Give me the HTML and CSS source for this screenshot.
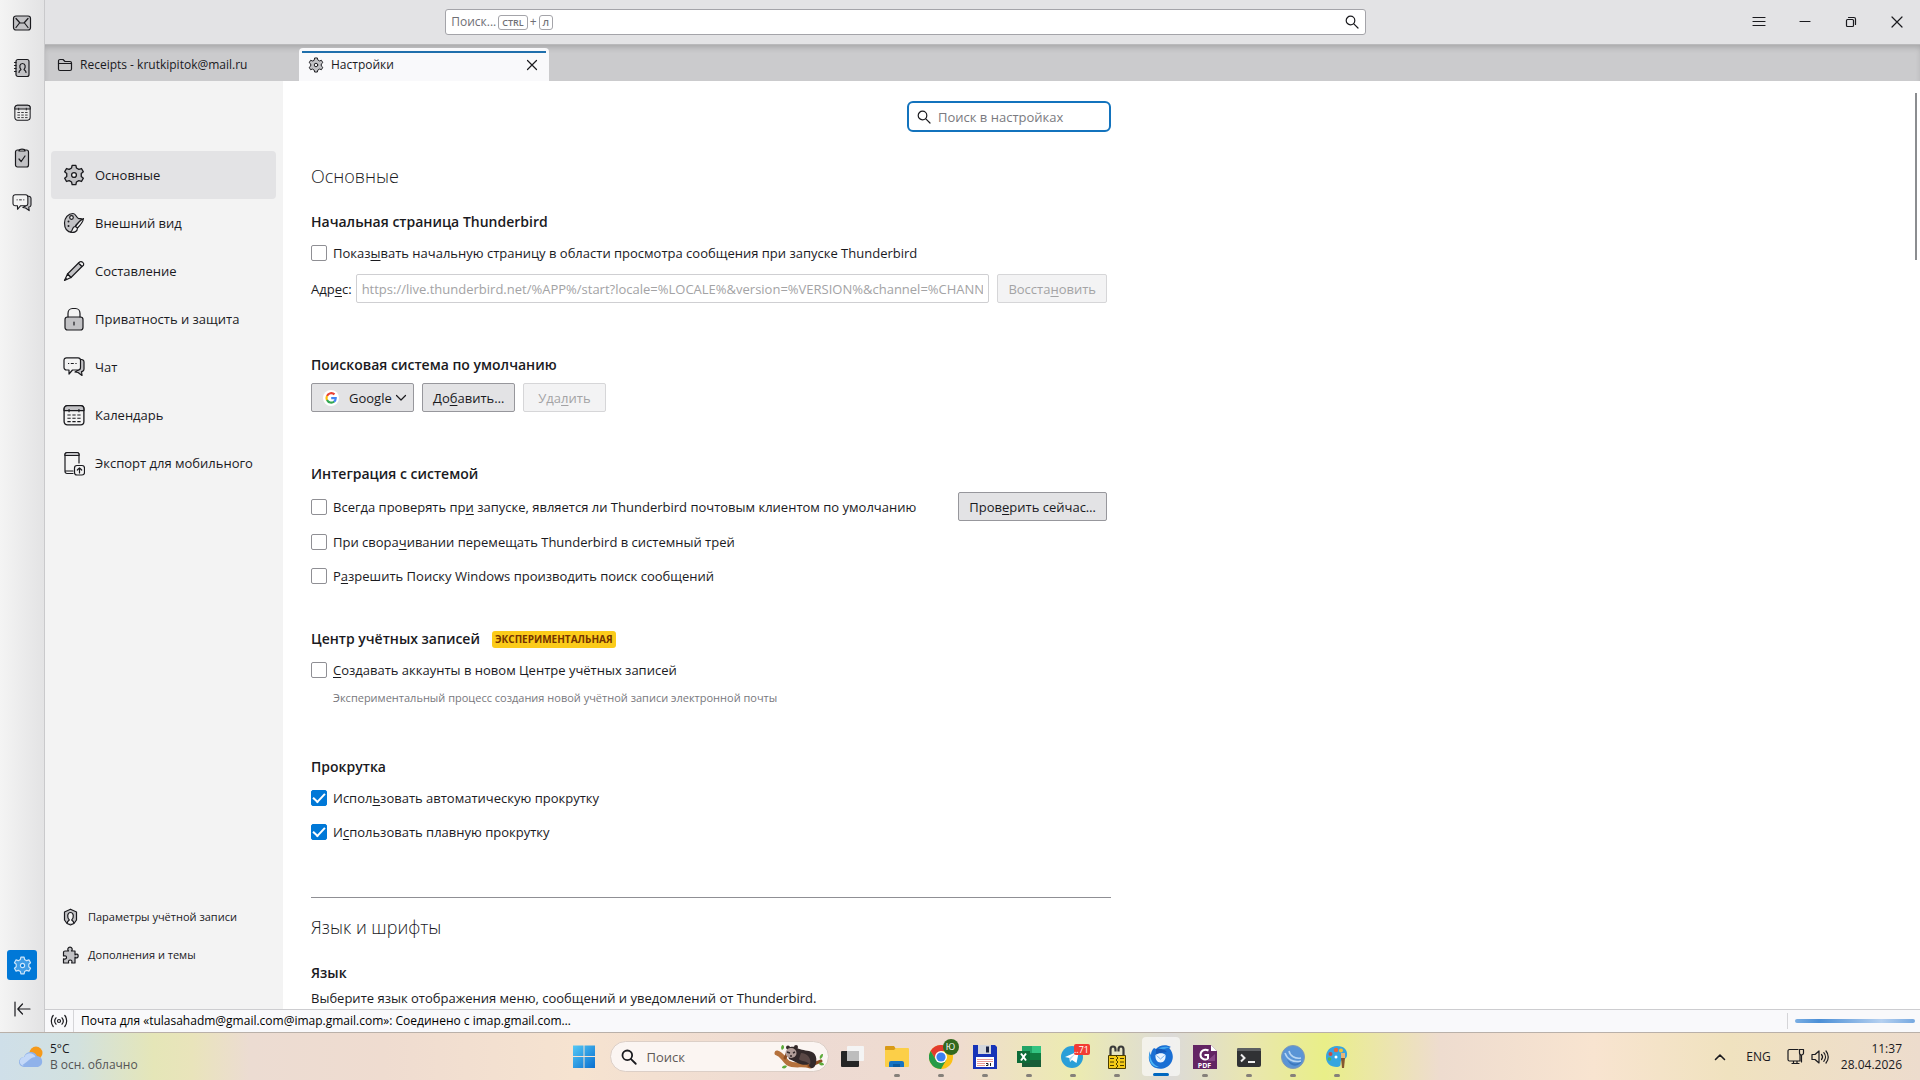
FILE: index.html
```
<!DOCTYPE html>
<html lang="ru">
<head>
    <meta charset="UTF-8">
    <meta name="viewport" content="width=device-width, initial-scale=1.0">
    <title>Настройки</title>
    <link rel="stylesheet" href="styles.css">
</head>
<body>

<!-- shared icons -->
<svg class="sprite" aria-hidden="true">
    <symbol id="i-gear" viewBox="0 0 20 20">
        <path class="fill" d="M7.8 3.6 8.3 1.2h3.4l.5 2.4 2.2 1.3 2.4-.8 1.7 3-1.9 1.6v2.6l1.9 1.6-1.7 3-2.4-.8-2.2 1.3-.5 2.4H8.3l-.5-2.4-2.2-1.3-2.4.8-1.7-3 1.9-1.6V8.7L1.5 7.1l1.7-3 2.4.8z"/>
        <circle class="hole" cx="10" cy="10" r="2.2"/>
    </symbol>
    <symbol id="i-calendar" viewBox="0 0 20 20">
        <rect x="1" y="1.5" width="18" height="17.5" rx="3"/>
        <path class="fill" d="M1 6V4.5a3 3 0 0 1 3-3h12a3 3 0 0 1 3 3V6z"/>
        <path class="thin" d="M5.5 4.5v3M14.5 4.5v3"/>
        <path class="thin" d="M4 10h3M8.5 10h3M13 10h3M4 13h3M8.500 13h3M13 13h3M4 16h3M8.5 16h3M13 16h3"/>
    </symbol>
    <symbol id="i-chat" viewBox="0 0 22 20">
        <path class="fill" d="M17 2.500h1.500A2.500 2.500 0 0 1 21 5v7a2.500 2.500 0 0 1-2.500 2.500l.5 4-4-3-3-.5 5-3z"/>
        <path class="paper" d="M3.500.8h11.500A2.500 2.500 0 0 1 17.500 3.300v7.200A2.500 2.500 0 0 1 15 13H9.500L6 17v-4H3.500A2.500 2.500 0 0 1 1 10.500V3.300A2.500 2.500 0 0 1 3.500.8z"/>
        <path class="thin" d="M5 6.500h1.200M7.800 6.500h3M12.400 6.500h1.200"/>
    </symbol>
    <symbol id="i-search" viewBox="0 0 16 16">
        <circle cx="6.500" cy="6.500" r="4.300"/>
        <path d="m9.800 9.800 4.200 4.200"/>
    </symbol>
</svg>

<div class="app">
    <nav class="spaces" aria-label="Области">
        <button class="space" aria-label="Почта">
            <svg class="icon" width="20" height="20" viewBox="0 0 20 20"><rect class="fill" x="1.500" y="3" width="17" height="14" rx="2.500"/><path d="m4 5.500 4 4.500h4l4-4.500M4 14.500 7.500 10M16 14.500 12.500 10"/></svg>
        </button>
        <button class="space" aria-label="Адресная книга">
            <svg class="icon" width="20" height="20" viewBox="0 0 20 20"><rect class="fill" x="4" y="1.500" width="13" height="17" rx="2"/><path d="M2.500 4.500H4M2.500 7.500H4M2.500 10.500H4M2.500 13.500H4M7 14.500c0-2 1.500-2 2-3-2-2.500-1.500-6 1.500-6s3.500 3.500 1.500 6c.5 1 2 1 2 3"/></svg>
        </button>
        <button class="space" aria-label="Календарь">
            <svg class="icon" width="17" height="17"><use href="#i-calendar"/></svg>
        </button>
        <button class="space" aria-label="Задачи">
            <svg class="icon" width="20" height="20" viewBox="0 0 20 20"><rect class="fill" x="3.500" y="2" width="13" height="17" rx="2"/><path class="paper" d="M7 3c0-2.500 6-2.500 6 0z"/><path d="m7 11 2.200 2.500L13 8"/></svg>
        </button>
        <button class="space" aria-label="Чат">
            <svg class="icon" width="20" height="18"><use href="#i-chat"/></svg>
        </button>
        <div class="spaces-end">
            <button class="space-active" aria-label="Настройки">
                <svg class="icon" width="19" height="19"><use href="#i-gear"/></svg>
            </button>
            <button class="collapse" aria-label="Свернуть">
                <svg class="icon" width="18" height="16" viewBox="0 0 18 16"><path d="M2 1v14M5 8h12M9.500 3 4.800 8l4.700 5"/></svg>
            </button>
        </div>
    </nav>

    <div class="window">
        <header class="titlebar">
            <div class="global-search">
                <label for="globalSearch">Поиск... <kbd>CTRL</kbd>+<kbd>Л</kbd></label>
                <input type="text" id="globalSearch">
                <button aria-label="Найти">
                    <svg class="icon" width="16" height="16"><use href="#i-search"/></svg>
                </button>
            </div>
            <div class="window-buttons">
                <button aria-label="Меню"><svg class="icon" width="14" height="14" viewBox="0 0 14 14"><path d="M1 2.500h12M1 6.500h12M1 10.500h12"/></svg></button>
                <button aria-label="Свернуть окно"><svg class="icon" width="14" height="14" viewBox="0 0 14 14"><path d="M2 6.500h10"/></svg></button>
                <button aria-label="Восстановить окно"><svg class="icon" width="14" height="14" viewBox="0 0 14 14"><rect x="2.500" y="4.500" width="7" height="7" rx="1"/><path d="M4.500 2.500H10a1.500 1.500 0 0 1 1.500 1.500v5.500"/></svg></button>
                <button aria-label="Закрыть окно"><svg class="icon" width="14" height="14" viewBox="0 0 14 14"><path d="m2 2 10 10M12 2 2 12"/></svg></button>
            </div>
        </header>

        <div class="tabs">
            <a class="tab" href="#receipts">
                <svg class="icon" width="16" height="16" viewBox="0 0 16 16"><path class="fill" d="M1.500 6V4a1.500 1.500 0 0 1 1.500-1.500h3l2 2h5A1.500 1.500 0 0 1 14.500 6v.5h-13z"/><path d="M1.500 6.500h13V12a1.500 1.500 0 0 1-1.500 1.500H3A1.500 1.500 0 0 1 1.500 12z"/></svg>
                <span>Receipts - krutkipitok@mail.ru</span>
            </a>
            <div class="tab tab-selected">
                <svg class="icon" width="16" height="16"><use href="#i-gear"/></svg>
                <span>Настройки</span>
                <button aria-label="Закрыть вкладку"><svg class="icon" width="12" height="12" viewBox="0 0 12 12"><path d="m1.500 1.500 9 9M10.500 1.500l-9 9"/></svg></button>
            </div>
        </div>

        <div class="page">
            <nav class="sidebar">
                <a class="category selected" href="#general">
                    <svg class="icon" width="22" height="22"><use href="#i-gear"/></svg>Основные
                </a>
                <a class="category" href="#appearance">
                    <svg class="icon" width="22" height="22" viewBox="0 0 22 22"><path class="fill" d="M9 20.500C4 20 1.500 16 1.500 11S5 1.500 10 1.500c3 0 3 4 5.500 5 1.500.5 2.500-.5 3.500.5L13 13z"/><circle class="paper" cx="8.500" cy="5.500" r="1.800"/><circle class="dot" cx="5.500" cy="9.500" r="1"/><circle class="dot" cx="5.500" cy="14" r="1"/><path class="paper" d="M20.500 6.500c-3 1.500-5.500 4.500-8 8l2 1.500c3-3 5.500-6 6-9.500zM12.500 14.500c-4 0-2 4-5 5.500 3 1 7 0 7-4z"/></svg>Внешний вид
                </a>
                <a class="category" href="#compose">
                    <svg class="icon" width="22" height="22" viewBox="0 0 22 22"><path class="fill" d="M4.500 14 15.500 3l3.500 3.500L8 17.500z"/><path class="paper" d="m15.500 3 1.500-1.200c1.800-1 4.500 1.500 3.500 3.500L19 6.500zM4.500 14l-3 6.500L8 17.500z"/><path class="dot" d="m1.500 20.500 3-1.300-1.700-1.700z"/></svg>Составление
                </a>
                <a class="category" href="#privacy">
                    <svg class="icon" width="22" height="24" viewBox="0 0 22 24"><rect class="fill" x="2" y="10" width="18" height="13" rx="2.500"/><path d="M5 10V6.500C5 3.500 7 1.500 9.500 1.500h3C15 1.500 17 3.500 17 6.500V10M11 15v3"/></svg>Приватность и защита
                </a>
                <a class="category" href="#chat">
                    <svg class="icon" width="22" height="20"><use href="#i-chat"/></svg>Чат
                </a>
                <a class="category" href="#calendar">
                    <svg class="icon" width="22" height="22"><use href="#i-calendar"/></svg>Календарь
                </a>
                <a class="category" href="#qrexport">
                    <svg class="icon" width="22" height="25" viewBox="0 0 22 25"><path d="M10 22.500H4A2 2 0 0 1 2 20.500v-17a2 2 0 0 1 2-2h10a2 2 0 0 1 2 2V12M2 20h8"/><path class="fill" d="M2 4.500v-1a2 2 0 0 1 2-2h10a2 2 0 0 1 2 2v1z"/><rect class="paper" x="11.500" y="14.500" width="10" height="9.500" rx="2.500"/><path d="M16.500 22v-5M14.300 19l2.200-2.200 2.200 2.200"/></svg>Экспорт для мобильного
                </a>

                <div class="sidebar-footer">
                    <a href="#accounts">
                        <svg class="icon" width="16" height="18" viewBox="0 0 16 18"><path class="fill" d="M8 1.200 14 4v8l-2.500 3.500L8 17l-3.500-1.500L2 12V4z"/><path class="paper" d="M4.800 15c0-2 1.200-2.300 2-3C4.500 10 4.500 4.500 8 4.500s3.500 5.500 1.200 7.500c.8.700 2 1 2 3"/></svg>Параметры учётной записи
                    </a>
                    <a href="#addons">
                        <svg class="icon" width="17" height="18" viewBox="0 0 17 18"><path class="fill" d="M3 5h3.500C5 3.500 6 1.200 8 1.200S11 3.500 9.500 5H13v3.800c1.200-1.300 3.200-.8 3.200 1.200s-2 2.500-3.200 1.200V17H9.700c.8-2-.2-3-1.500-3s-2.200 1-1.500 3H1.500v-4.200c2 .8 3-.2 3-1.400s-1-2-3-1.400V6.500A1.500 1.500 0 0 1 3 5z"/></svg>Дополнения и темы
                    </a>
                </div>
            </nav>

            <main class="content">
                <div class="pane">
                    <div class="settings-search">
                        <svg class="icon" width="16" height="16"><use href="#i-search"/></svg>
                        <input type="search" placeholder="Поиск в настройках" aria-label="Поиск в настройках">
                    </div>

                    <h1>Основные</h1>

                    <section class="group">
                        <h2>Начальная страница Thunderbird</h2>
                        <label class="check"><input type="checkbox"><span>Показ<u>ы</u>вать начальную страницу в области просмотра сообщения при запуске Thunderbird</span></label>
                        <div class="row">
                            <label class="address-label" for="address">Адр<u>е</u>с:</label>
                            <input class="address" type="text" id="address" disabled value="https://live.thunderbird.net/%APP%/start?locale=%LOCALE%&amp;version=%VERSION%&amp;channel=%CHANNEL">
                            <button class="btn" disabled>Восста<u>н</u>овить</button>
                        </div>
                    </section>

                    <section class="group">
                        <h2>Поисковая система по умолчанию</h2>
                        <div class="row">
                            <div class="engine">
                                <svg width="16" height="16" viewBox="0 0 16 16"><circle cx="8" cy="8" r="8" fill="#fff"/><g fill="none" stroke-width="2.200"><path stroke="#ea4335" d="M4 6a4.700 4.700 0 0 1 7.500-1.600"/><path stroke="#fbbc05" d="M4 10.200a4.700 4.700 0 0 1 0-4.300"/><path stroke="#34a853" d="M11.200 11.500A4.700 4.700 0 0 1 4 10"/><path stroke="#4285f4" d="M8.200 8.200h4.500c0 1.500-.6 2.600-1.600 3.400"/></g></svg>
                                <select aria-label="Поисковая система">
                                    <option>Google</option>
                                </select>
                                <svg class="icon" width="12" height="12" viewBox="0 0 12 12"><path d="m1.500 3.500 4.500 4.500 4.500-4.500"/></svg>
                            </div>
                            <button class="btn">До<u>б</u>авить…</button>
                            <button class="btn btn-wide" disabled>Уда<u>л</u>ить</button>
                        </div>
                    </section>

                    <section class="group group-tight">
                        <h2>Интеграция с системой</h2>
                        <div class="row row-spread">
                            <label class="check"><input type="checkbox"><span>Всегда проверять пр<u>и</u> запуске, является ли Thunderbird почтовым клиентом по умолчанию</span></label>
                            <button class="btn">Пров<u>е</u>рить сейчас…</button>
                        </div>
                        <label class="check"><input type="checkbox"><span>При свора<u>ч</u>ивании перемещать Thunderbird в системный трей</span></label>
                        <label class="check"><input type="checkbox"><span>Р<u>а</u>зрешить Поиску Windows производить поиск сообщений</span></label>
                    </section>

                    <section class="group">
                        <h2>Центр учётных записей <span class="badge">ЭКСПЕРИМЕНТАЛЬНАЯ</span></h2>
                        <label class="check"><input type="checkbox"><span><u>С</u>оздавать аккаунты в новом Центре учётных записей</span></label>
                        <p class="hint">Экспериментальный процесс создания новой учётной записи электронной почты</p>
                    </section>

                    <section class="group">
                        <h2>Прокрутка</h2>
                        <label class="check"><input type="checkbox" checked><span>Испол<u>ь</u>зовать автоматическую прокрутку</span></label>
                        <label class="check"><input type="checkbox" checked><span>И<u>с</u>пользовать плавную прокрутку</span></label>
                    </section>

                    <h1 class="divided">Язык и шрифты</h1>

                    <section class="group">
                        <h2>Язык</h2>
                        <p class="intro">Выберите язык отображения меню, сообщений и уведомлений от Thunderbird.</p>
                    </section>
                </div>
                <div class="scroll-thumb"></div>
            </main>
        </div>

        <footer class="statusbar">
            <svg class="icon" width="18" height="14" viewBox="0 0 18 14"><circle cx="9" cy="7" r="1.500"/><path d="M6 3.800c-1.500 1.800-1.500 4.600 0 6.400M12 3.800c1.500 1.800 1.500 4.600 0 6.400M3.200 1.500c-2.500 3-2.500 8 0 11M14.800 1.500c2.500 3 2.500 8 0 11"/></svg>
            <span class="status-text">Почта для «tulasahadm@gmail.com@imap.gmail.com»: Соединено с imap.gmail.com…</span>
            <div class="progress"></div>
        </footer>
    </div>
</div>

<footer class="taskbar">
    <button class="weather">
        <svg width="26" height="24" viewBox="0 0 26 24"><circle cx="18" cy="8" r="6.500" fill="#f59a1b"/><path fill="#8fb2ea" d="M6 22a5 5 0 0 1 0-10 7 7 0 0 1 13-1 5.600 5.600 0 0 1 1 11z"/><path fill="#c3d8f8" d="M6 21a4.500 4.500 0 0 1 .5-9c1.500-5 9-5 11 0-5 0-8 5-13 8z"/></svg>
        <span><b>5°C</b>В осн. облачно</span>
    </button>

    <div class="apps">
        <button class="app-btn" aria-label="Пуск">
            <svg width="24" height="24" viewBox="0 0 24 24"><defs><linearGradient id="win" x2="1" y2="1"><stop stop-color="#54c8f5"/><stop offset="1" stop-color="#0a6fd0"/></linearGradient></defs><path fill="url(#win)" d="M1 .5h10.500V11H1zM12.500.500H23V11H12.500zM1 12h10.500v11H1zM12.500 12H23v11H12.500z"/></svg>
        </button>
        <button class="task-search">
            <svg class="icon bold" width="18" height="18"><use href="#i-search"/></svg>
            <span>Поиск</span>
            <svg width="52" height="26" viewBox="0 0 52 26"><path fill="none" stroke="#b5713c" stroke-width="5" stroke-linecap="round" d="M4 9c5 1 6 6 11 10 7 4 14 0 22 3"/><path fill="none" stroke="#8a4c22" stroke-width="3" stroke-linecap="round" d="M12 14 15 8M36 22l12-5"/><path fill="#33292a" d="M14 8c0-4 3-6 8-5 5 3 9 3 14 4 7 1 9 8 6 15-3 4-6 2-6-2-6 3-15-3-20-5z"/><path fill="#5a4846" d="M28 9c6 0 11 5 9 12-3-5-9-3-11-6z"/><circle cx="15" cy="3.500" r="2" fill="#33292a"/><circle cx="23" cy="3" r="2" fill="#33292a"/><ellipse cx="18" cy="9" rx="5.500" ry="5" fill="#b09c97"/><path stroke="#33292a" stroke-width="1.500" d="m14 8 3 1M20 9l2-1M17 12h2"/><path fill="#5dab3b" d="M9 6c-2-3 0-5 1-5 2 2 1 4-1 5zM47 15c-1-3 1-5 3-5 0 3-1 4-3 5zM14 22c-3-1-5 0-5 2 3 1 4 0 5-2zM46 19c3-1 5 0 5 2-3 1-5 0-5-2z"/></svg>
        </button>
        <button class="app-btn" aria-label="Представление задач">
            <svg width="24" height="24" viewBox="0 0 24 24"><rect x="0" y="6" width="18" height="16" rx="1" fill="#252525"/><rect x="6" y="1" width="17" height="15" rx="1" fill="#f4f4f4"/><path fill="#bdbdbd" d="M6 6h12v10H6z"/></svg>
        </button>
        <button class="app-btn running" aria-label="Проводник">
            <svg width="26" height="24" viewBox="0 0 26 24"><path fill="#d99a17" d="M1 2a1 1 0 0 1 1-1h8l2 3v3H1z"/><path fill="#fccf48" d="M1 5h9l2-2h12a1 1 0 0 1 1 1v17a1 1 0 0 1-1 1H2a1 1 0 0 1-1-1z"/><path fill="#1673c4" d="M5 22v-4a2 2 0 0 1 2-2h11a2 2 0 0 1 2 2v4z"/><path fill="#0c5a9e" d="M9 19h7v3H9z"/></svg>
        </button>
        <button class="app-btn running" aria-label="Chrome">
            <svg width="24" height="24" viewBox="0 0 24 24"><circle cx="12" cy="12" r="12" fill="#fbc116"/><path fill="#e33b2e" d="M1.600 6A12 12 0 0 1 22.400 6H12L7 15z"/><path fill="#269b47" d="M1.600 6A12 12 0 0 0 12 24l5.200-9H7z"/><circle cx="12" cy="12" r="6" fill="#fff"/><circle cx="12" cy="12" r="4.600" fill="#3d7ff0"/></svg>
            <span class="bubble bubble-green">Ю</span>
        </button>
        <button class="app-btn running" aria-label="Total Commander">
            <svg width="24" height="24" viewBox="0 0 24 24"><path fill="#1733b8" d="M0 0h22l2 2v22H0z"/><path fill="#d4d6dc" d="M5 0h13v9H5z"/><path fill="#1b2346" d="M13 1.500h3v6h-3z"/><path fill="#fff" d="M3 12h18v10H3z"/><path stroke="#e79a97" d="M4 14.500h16M4 16.500h16M4 18.500h8M4 20.500h8"/><path fill="none" stroke="#222" d="M13 18.500h2v2h-2M17.500 18v3"/></svg>
        </button>
        <button class="app-btn running" aria-label="Excel">
            <svg width="24" height="24" viewBox="0 0 24 24"><path fill="#21a366" d="M5 1h19v21H5z"/><path fill="#107c41" d="M5 8h10v7H5z"/><path fill="#33c481" d="M15 1h9v7h-9z"/><path fill="#185c37" d="M5 15h19v7H5z"/><path fill="#107c41" d="M15 8h9v7h-9z"/><path fill="#0d6b38" d="M0 6h13v12H0z"/><path stroke="#fff" stroke-width="2" d="m4 8.500 5 7M9 8.500l-5 7"/></svg>
        </button>
        <button class="app-btn running" aria-label="Telegram">
            <svg width="24" height="24" viewBox="0 0 24 24"><circle cx="11" cy="12" r="11" fill="#2a9fd8"/><path fill="#fff" d="m4 12 14-6-2.500 12-4.500-3-2 2-.5-4z"/><path fill="#b6dcf0" d="m8.500 13 7-5.500-5 6-1.500 3z"/></svg>
            <span class="bubble bubble-red">..71</span>
        </button>
        <button class="app-btn running" aria-label="Замок">
            <svg width="20" height="24" viewBox="0 0 20 24"><path fill="none" stroke="#3a3a3a" stroke-width="2.200" d="M3.500 11V4.500c0-4 5-4 5 0v2M11.500 6.500v-2c0-4 5-4 5 0V11"/><path fill="#f5cb18" stroke="#4a3d00" d="M1.500 10.500h17v13h-17z"/><path fill="none" stroke="#4a3d00" d="M9 11l2 2-2 2 2 2-2 2 2 2-2 2M3 13.500h4M13 13.500h4M3 17h4M13 17h4M3 20.500h4M13 20.500h4"/></svg>
        </button>
        <button class="app-btn running current" aria-label="Thunderbird">
            <svg width="26" height="24" viewBox="0 0 26 24"><path fill="#1a6fd4" d="M8 4C11 0 18-1 23 2c-2 .5-2 1-1 2 3 4 4 9 1 14-3 5-10 7-15 5C2 21-1 14 2 6c0 2 0 3 1 4 0-3 1-5 3-7z"/><path fill="#4db6f5" d="M2 7c0 8 3 13 9 15-6 1-12-6-9-15z"/><path fill="#3fa4ee" d="M9 5c4-4 10-4 13-2-5 0-8 2-9 4z"/><path fill="#1558b8" d="M8 4c4-1 9 0 11 3l-7 1-4 3z"/><path fill="#eaf4ff" d="M7.500 10c3-2.500 8-2.500 10 0 .5 4-1.500 7.500-5 7.500S7 14 7.500 10z"/><path fill="none" stroke="#7fb2ea" d="m8.500 10.500 4 3.500 4-3.500"/></svg>
        </button>
        <button class="app-btn running" aria-label="PDF">
            <svg width="24" height="24" viewBox="0 0 24 24"><path fill="#632463" d="M0 0h18l6 6v18H0z"/><path fill="#fff" d="M18 0v6h6z"/><path fill="#854585" d="m14 16 8-7v7z"/><path fill="none" stroke="#fff" stroke-width="2" d="M15.500 5.500c-4-2-8 0-8 4.500s6 5.500 7.500 3.500V10h-3.500"/></svg>
            <span class="pdf">PDF</span>
        </button>
        <button class="app-btn running" aria-label="Терминал">
            <svg width="24" height="20" viewBox="0 0 24 20"><rect width="24" height="19" y="1" rx="2" fill="#303234"/><path fill="#5d6062" d="M0 4V2.500A1.500 1.500 0 0 1 1.500 1h21A1.500 1.500 0 0 1 24 2.500V4z"/><path fill="none" stroke="#eee" stroke-width="2" d="m4 7.500 3.500 3.500L4 14.500M11 15h7"/></svg>
        </button>
        <button class="app-btn running" aria-label="База данных">
            <svg width="24" height="24" viewBox="0 0 24 24"><circle cx="12" cy="12" r="11.500" fill="#5a95d6" stroke="#8099b5"/><path fill="#3c78be" d="M6 14c4 5 10 6 15 2-2 5-11 8-15-2z"/><path fill="none" stroke="#b7d6f3" stroke-width="1.500" d="M4 8c2 6 8 10 16 8M8 6c1 5 6 8 12 7"/></svg>
        </button>
        <button class="app-btn running" aria-label="Paint">
            <svg width="24" height="24" viewBox="0 0 24 24"><path fill="#36a5e0" d="M12 1c7 0 11 4 10 10-1 4-5 3-6 5s1 6-4 6C5 22 1 18 1 12S5 1 12 1z"/><circle cx="11" cy="5" r="2.200" fill="#e8643c"/><circle cx="5.500" cy="9" r="2" fill="#c84848"/><circle cx="4.500" cy="14" r="1.800" fill="#57b84c"/><circle cx="16" cy="5.500" r="2" fill="#f2c230"/><circle cx="11" cy="12" r="1.500" fill="#fff"/><path fill="#e5b578" d="M16 8h4v6h-4z"/><path fill="#85572f" d="M16 13h4l-1 10h-2z"/></svg>
        </button>
    </div>

    <div class="tray">
        <button aria-label="Скрытые значки"><svg class="icon bold" width="12" height="12" viewBox="0 0 12 12"><path d="m1.500 8.500 4.500-4.500 4.500 4.500"/></svg></button>
        <button class="lang">ENG</button>
        <button class="devices" aria-label="Сеть и звук">
            <svg class="icon" width="18" height="17" viewBox="0 0 18 17"><path d="M11 1.500H2.500A1.500 1.500 0 0 0 1 3v8.500A1.500 1.500 0 0 0 2.500 13H13V7M5 15.500h7M6.500 13v2.500M10 13v2.500M12.500 1.500h4V5a2 2 0 0 1-4 0zM14.500 7v7"/></svg>
            <svg class="icon" width="18" height="16" viewBox="0 0 18 16"><path d="M1 5.500h3L8 2v12L4 10.500H1zM10.500 5.500c1.300 1.500 1.300 3.500 0 5M12.800 3.700c2.200 2.500 2.200 6.100 0 8.600M15 2c3 3.500 3 8.500 0 12"/></svg>
        </button>
        <button class="clock">11:37<br>28.04.2026</button>
    </div>
</footer>

</body>
</html>
```
FILE: styles.css
```
* {
    box-sizing: border-box;
}

body {
    margin: 0;
    height: 100vh;
    display: flex;
    flex-direction: column;
    overflow: hidden;
    font-family: "Open Sans", "Noto Sans", sans-serif;
    font-size: 13px;
    line-height: 18px;
    color: #1a1a1e;
    background-color: #fff;
}

button, input, select {
    font: inherit;
    color: inherit;
    margin: 0;
}

button {
    display: flex;
    align-items: center;
    justify-content: center;
    padding: 0;
    border: none;
    background: none;
}

a {
    color: inherit;
    text-decoration: none;
}

h1, h2, p {
    margin: 0;
}

/* icons */
.sprite {
    display: none;
}

svg {
    flex: none;
}

.icon {
    fill: none;
    stroke: #1a1a1e;
    stroke-width: 1.2;
    stroke-linecap: round;
    stroke-linejoin: round;
}

.icon.bold {
    stroke-width: 1.6;
}

.fill {
    fill: var(--icon-fill, #c2c2c5);
}

.hole, .paper {
    fill: var(--icon-paper, #f3f3f3);
}

.thin {
    stroke-width: 1;
    stroke-linecap: butt;
}

.dot {
    fill: #1a1a1e;
    stroke: none;
}

.app {
    flex: 1;
    min-height: 0;
    display: flex;
}

/* left bar */
.spaces {
    width: 45px;
    display: flex;
    flex-direction: column;
    border-right: 1px solid #c9c9cb;
    background: linear-gradient(to right, #f4f4f4, #e3e3e4);
}

.space {
    height: 45px;
}

.spaces-end {
    margin-top: auto;
    padding-bottom: 7px;
    display: flex;
    flex-direction: column;
    align-items: center;
    gap: 13px;
}

.space-active {
    --icon-fill: #3f9ce6;
    --icon-paper: #0078d7;
    width: 30px;
    height: 30px;
    border-radius: 3px;
    background-color: #0078d7;
}

.space-active .icon {
    stroke: #cfe6fa;
}

.collapse {
    height: 32px;
}

.window {
    flex: 1;
    min-width: 0;
    display: flex;
    flex-direction: column;
}

/* title bar */
.titlebar {
    height: 45px;
    display: grid;
    grid-template-columns: 40fr 92fr 37fr auto;
    align-items: center;
    border-bottom: 1px solid #b9b9bb;
    background-color: #e3e3e5;
}

.global-search {
    grid-column: 2;
    height: 26px;
    display: flex;
    align-items: center;
    padding: 0 5px;
    border: 1px solid #a4a4a9;
    border-radius: 3px;
    background-color: #fff;
    color: #6f6f75;
    font-size: 12px;
}

.global-search label {
    display: flex;
    align-items: center;
    gap: 2px;
}

.global-search input {
    flex: 1;
    min-width: 0;
    border: none;
    outline: none;
    background: none;
}

kbd {
    padding: 0 3px;
    border: 1px solid #a4a4a9;
    border-radius: 3px;
    font-family: inherit;
    font-size: 9px;
    font-weight: 600;
    line-height: 13px;
}

.window-buttons {
    grid-column: 4;
    display: flex;
}

.window-buttons button {
    width: 46px;
    height: 44px;
}

/* tabs */
.tabs {
    height: 36px;
    padding-top: 3px;
    display: flex;
    background-color: #cbcbcd;
    box-shadow: inset 0 4px 6px -2px rgba(0, 0, 0, 0.2);
    font-size: 12px;
}

.tab {
    width: 250px;
    margin-right: 4px;
    padding: 0 12px;
    display: flex;
    align-items: center;
    gap: 7px;
}

.tab-selected {
    padding: 0 9px;
    border-radius: 4px 4px 0 0;
    background: linear-gradient(#1f6fac, #1f6fac) 50% 3px / calc(100% - 6px) 2px no-repeat #f9f9fb;
}

.tab-selected button {
    width: 16px;
    height: 16px;
    margin-left: auto;
}

/* settings page */
.page {
    flex: 1;
    min-height: 0;
    display: flex;
}

.sidebar {
    width: 238px;
    padding: 70px 7px 35px 6px;
    display: flex;
    flex-direction: column;
    background-color: #f3f3f3;
}

.category {
    height: 48px;
    padding-left: 12px;
    display: flex;
    align-items: center;
    gap: 10px;
    border-radius: 4px;
}

.category.selected {
    background-color: #e3e3e5;
}

.sidebar-footer {
    margin-top: auto;
    font-size: 11px;
}

.sidebar-footer a {
    height: 38px;
    padding-left: 11px;
    display: flex;
    align-items: center;
    gap: 9px;
}

.sidebar-footer .icon {
    width: 17px;
}

.content {
    flex: 1;
    min-width: 0;
    position: relative;
    padding: 20px 28px 0;
    overflow: hidden;
}

.pane {
    max-width: 800px;
}

.scroll-thumb {
    position: absolute;
    top: 12px;
    right: 3px;
    width: 2px;
    height: 167px;
    background-color: #8b8d90;
}

.settings-search {
    width: 204px;
    height: 31px;
    margin-left: auto;
    padding: 0 7px;
    display: flex;
    align-items: center;
    gap: 6px;
    border: 2px solid #1373bd;
    border-radius: 6px;
}

.settings-search input {
    flex: 1;
    min-width: 0;
    padding: 0;
    border: none;
    outline: none;
    background: none;
}

.settings-search input::placeholder {
    color: #7a7a80;
    opacity: 1;
}

h1 {
    margin-top: 31px;
    margin-bottom: 23px;
    font-size: 18px;
    font-weight: 300;
    line-height: 26px;
}

h1.divided {
    margin-top: 0;
    padding-top: 16px;
    border-top: 1px solid #8f8f94;
}

h2 {
    display: flex;
    align-items: center;
    gap: 12px;
    margin-bottom: 4px;
    font-size: 14px;
    font-weight: 600;
    line-height: 20px;
}

.group {
    display: flex;
    flex-direction: column;
    margin-bottom: 48px;
}

.group-tight {
    margin-bottom: 36px;
}

.check {
    height: 34px;
    display: flex;
    align-items: center;
    gap: 6px;
}

.check input {
    appearance: none;
    flex: none;
    width: 16px;
    height: 16px;
    display: grid;
    place-content: center;
    border: 1px solid #8f8f94;
    border-radius: 2px;
    background-color: #fff;
}

.check input:checked {
    border-color: #0078d7;
    background-color: #0078d7;
}

.check input:checked::before {
    content: "";
    width: 10px;
    height: 5px;
    margin-bottom: 3px;
    border-left: 2px solid #fff;
    border-bottom: 2px solid #fff;
    transform: rotate(-47deg);
}

u {
    text-decoration-thickness: 1px;
    text-underline-offset: 2px;
}

.row {
    height: 29px;
    margin: 4px 0;
    padding-right: 4px;
    display: flex;
    align-items: center;
    gap: 8px;
}

.row-spread {
    justify-content: space-between;
}

.address-label {
    margin-right: -4px;
}

.address {
    flex: 1;
    min-width: 0;
    height: 29px;
    padding: 0 5px;
    border: 1px solid #cfcfd2;
    border-radius: 2px;
    background-color: #fff;
    color: #a3a3a5;
}

.btn {
    height: 29px;
    padding: 0 10px;
    display: block;
    border: 1px solid #97979c;
    border-radius: 2px;
    background-color: #e3e3e5;
}

.btn-wide {
    padding: 0 14px;
}

.btn:disabled {
    border-color: #d6d6d8;
    background-color: #f3f3f4;
    color: #a3a3a5;
}

.engine {
    height: 29px;
    padding: 0 6px 0 11px;
    display: flex;
    align-items: center;
    border: 1px solid #97979c;
    border-radius: 2px;
    background-color: #e3e3e5;
}

.engine select {
    appearance: none;
    margin: 0 3px 0 10px;
    padding: 0;
    border: none;
    background: none;
}

.badge {
    padding: 0 3px;
    border-radius: 3px;
    background-color: #fbcb1a;
    color: #733300;
    font-size: 10px;
    font-weight: 700;
    line-height: 17px;
}

.hint {
    margin: 2px 0 2px 22px;
    font-size: 11px;
    color: #77777c;
}

.intro {
    margin-top: 2px;
}

/* status bar */
.statusbar {
    height: 23px;
    padding: 0 5px;
    display: flex;
    align-items: center;
    border-top: 1px solid #cdcdd0;
    background-color: #f9f9fb;
    font-size: 12px;
    color: #000;
}

.status-text {
    flex: 1;
    margin-left: 5px;
    padding-left: 7px;
    border-left: 1px solid #d5d5d8;
    line-height: 22px;
}

.progress {
    width: 128px;
    padding-left: 7px;
    border-left: 1px solid #d5d5d8;
    line-height: 16px;
}

.progress::before {
    content: "";
    display: block;
    height: 4px;
    margin: 6px 0;
    border-radius: 2px;
    background: linear-gradient(to right, #7aaee3, #4b8fd6 20%, #b5d0f0 72%, #76a8e0);
}

/* taskbar */
.taskbar {
    height: 48px;
    padding: 0 18px;
    display: grid;
    grid-template-columns: 1fr auto 1fr;
    align-items: center;
    border-top: 1px solid #b9b0a9;
    background: linear-gradient(to right, #cfdfe9, #d2e1df 4%, #e5e6b8 8%, #e9e4bb 10%, #ecdcd2 13%, #efdcd0 20%, #f6e3d0 30%, #eddad3 42%, #efdccf 50%, #ecebb0 56%, #dcdad8 61%, #e9e6b0 65%, #e9ef88 69%, #eedccf 75%, #f8e4d0 83%, #f0e2bf 90%, #eddccd);
    font-size: 12px;
    line-height: 16px;
}

.weather {
    justify-self: start;
    gap: 6px;
    text-align: left;
    color: #555;
}

.weather b {
    display: block;
    font-weight: 400;
    color: #1a1a1e;
}

.apps {
    display: flex;
    align-items: center;
}

.app-btn {
    position: relative;
    width: 44px;
    height: 46px;
}

.running::after {
    content: "";
    position: absolute;
    bottom: 3px;
    left: 19px;
    width: 6px;
    height: 3px;
    border-radius: 2px;
    background-color: #85807a;
}

.current {
    width: 38px;
    height: 39px;
    margin: 0 3px;
    border-radius: 4px;
    background-color: rgba(255, 255, 255, 0.6);
}

.current::after {
    bottom: 0;
    left: 11px;
    width: 16px;
    background-color: #0067c0;
}

.bubble {
    position: absolute;
    top: 5px;
    left: 24px;
    color: #fff;
    font-size: 9px;
}

.bubble-green {
    width: 16px;
    border-radius: 8px;
    background-color: #33691e;
}

.bubble-red {
    top: 10px;
    left: 23px;
    width: 16px;
    border-radius: 2px;
    background-color: #f23c34;
    line-height: 11px;
}

.pdf {
    position: absolute;
    bottom: 11px;
    color: #fff;
    font-size: 7px;
    font-weight: 700;
    line-height: 7px;
}

.task-search {
    width: 219px;
    height: 31px;
    margin: 0 2px 0 4px;
    padding: 0 3px 0 9px;
    gap: 9px;
    border: 1px solid #dccfc7;
    border-radius: 16px;
    background-color: #fbf5f2;
    font-size: 13px;
    color: #5f5a58;
}

.task-search span {
    margin-right: auto;
}

.tray {
    justify-self: end;
    display: flex;
    align-items: center;
}

.lang {
    margin: 0 16px 0 20px;
}

.devices {
    gap: 6px;
    margin-right: 12px;
}

.clock {
    display: block;
    text-align: right;
}
```
